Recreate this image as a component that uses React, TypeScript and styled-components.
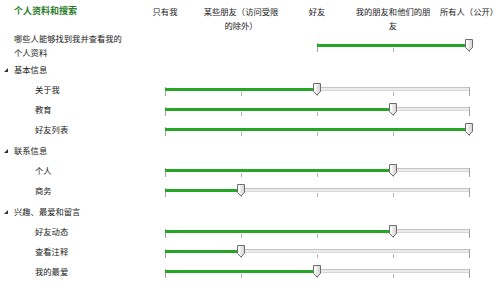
import React from "react";
import styled, { createGlobalStyle } from "styled-components";

const STEP = 76;
const SPAN = STEP * 4;

const Global = createGlobalStyle`
  html, body { margin: 0; padding: 0; background: #ffffff; }
  body {
    font-family: "Noto Sans CJK SC", "Noto Sans", sans-serif;
    color: #222;
  }
`;

const Page = styled.div`
  width: 500px;
  height: 290px;
  padding-top: 4px;
  box-sizing: border-box;
  font-size: 8.3px;
  line-height: 14px;
`;

const Header = styled.div`
  display: grid;
  grid-template-columns: 127px repeat(5, ${STEP}px);
  height: 27px;
`;

const Title = styled.div`
  padding-left: 14px;
  font-size: 9px;
  font-weight: bold;
  color: #2b7d2b;
  white-space: nowrap;
`;

const ColLabel = styled.div`
  text-align: center;
  white-space: nowrap;
  color: #222;
`;

const Row = styled.div<{ $tall?: boolean; $gapTop?: boolean }>`
  display: grid;
  grid-template-columns: 165px ${SPAN + 10}px;
  align-items: center;
  height: ${(p) => (p.$tall ? 28 : 20)}px;
  margin-top: ${(p) => (p.$gapTop ? 1 : 0)}px;
`;

const Label = styled.div<{ $indent: number; $wrap?: number }>`
  padding-left: ${(p) => p.$indent}px;
  width: ${(p) => (p.$wrap ? `${p.$wrap}px` : "auto")};
  line-height: 14px;
  color: #222;
`;

const Section = styled.div`
  display: flex;
  align-items: center;
  gap: 6px;
  padding-left: 4px;
  height: 20px;
  color: #222;
`;

const Arrow = styled.span`
  width: 0;
  height: 0;
  border-left: 4px solid transparent;
  border-bottom: 4px solid #333;
  margin-top: 1px;
`;

const SliderWrap = styled.div`
  position: relative;
  width: ${SPAN}px;
  height: 13px;
`;

const TrackRow = styled.div<{ $start: number }>`
  position: absolute;
  top: 4px;
  left: ${(p) => p.$start * STEP}px;
  right: 0;
  height: 4px;
  display: flex;
  align-items: flex-end;
`;

const Fill = styled.div`
  height: 3px;
  background: #26a626;
  flex: none;
`;

const Rest = styled.div`
  flex: 1;
  height: 4px;
  box-sizing: border-box;
  border-top: 1px solid #c4c4c4;
  border-bottom: 1px solid #d8d8d8;
  background: #ececec;
`;

const Tick = styled.div<{ $long?: boolean }>`
  position: absolute;
  width: 1px;
  top: ${(p) => (p.$long ? 4 : 9)}px;
  height: ${(p) => (p.$long ? 9 : 4)}px;
  background: ${(p) => (p.$long ? "#a2a2a2" : "#b4b4b4")};
`;

const Thumb = styled.svg`
  position: absolute;
  top: 0;
  width: 8px;
  height: 13px;
  overflow: visible;
`;

function Slider({ start = 0, value }: { start?: number; value: number }) {
  const ticks = [];
  for (let i = start; i <= 4; i++) {
    ticks.push(
      <Tick key={i} $long={i === start || i === 4} style={{ left: i * STEP }} />
    );
  }
  return (
    <SliderWrap>
      {ticks}
      <TrackRow $start={start}>
        <Fill style={{ width: (value - start) * STEP }} />
        <Rest />
      </TrackRow>
      <Thumb viewBox="0 0 8 13" style={{ left: value * STEP - 4 }}>
        <defs>
          <linearGradient id="tg" x1="0" y1="0" x2="1" y2="0">
            <stop offset="0" stopColor="#ffffff" />
            <stop offset="1" stopColor="#d2d2d2" />
          </linearGradient>
        </defs>
        <path
          d="M0.5 0.5 H7.5 V8.5 L4 12 L0.5 8.5 Z"
          fill="url(#tg)"
          stroke="#6e6e6e"
          strokeWidth="1"
          strokeLinejoin="round"
        />
        <rect x="2" y="2" width="1" height="6" fill="#ffffff" />
      </Thumb>
    </SliderWrap>
  );
}

const columns: string[][] = [
  ["只有我"],
  ["某些朋友（访问受限", "的除外）"],
  ["好友"],
  ["我的朋友和他们的朋", "友"],
  ["所有人（公开）"],
];

type Item = { label: string; value: number };
type Group = { title: string; items: Item[] };

const groups: Group[] = [
  {
    title: "基本信息",
    items: [
      { label: "关于我", value: 2 },
      { label: "教育", value: 3 },
      { label: "好友列表", value: 4 },
    ],
  },
  {
    title: "联系信息",
    items: [
      { label: "个人", value: 3 },
      { label: "商务", value: 1 },
    ],
  },
  {
    title: "兴趣、最爱和留言",
    items: [
      { label: "好友动态", value: 3 },
      { label: "查看注释", value: 1 },
      { label: "我的最爱", value: 2 },
    ],
  },
];

export default function App() {
  return (
    <Page>
      <Global />
      <Header>
        <Title>个人资料和搜索</Title>
        {columns.map((lines, i) => (
          <ColLabel key={i}>
            {lines.map((l, j) => (
              <div key={j}>{l}</div>
            ))}
          </ColLabel>
        ))}
      </Header>
      <Row $tall>
        <Label $indent={14} $wrap={112}>
          哪些人能够找到我并查看我的个人资料
        </Label>
        <Slider start={2} value={4} />
      </Row>
      {groups.map((g, gi) => (
        <React.Fragment key={g.title}>
          <Row $gapTop={gi > 0}>
            <Section>
              <Arrow />
              <span>{g.title}</span>
            </Section>
          </Row>
          {g.items.map((it) => (
            <Row key={it.label}>
              <Label $indent={35}>{it.label}</Label>
              <Slider value={it.value} />
            </Row>
          ))}
        </React.Fragment>
      ))}
    </Page>
  );
}
